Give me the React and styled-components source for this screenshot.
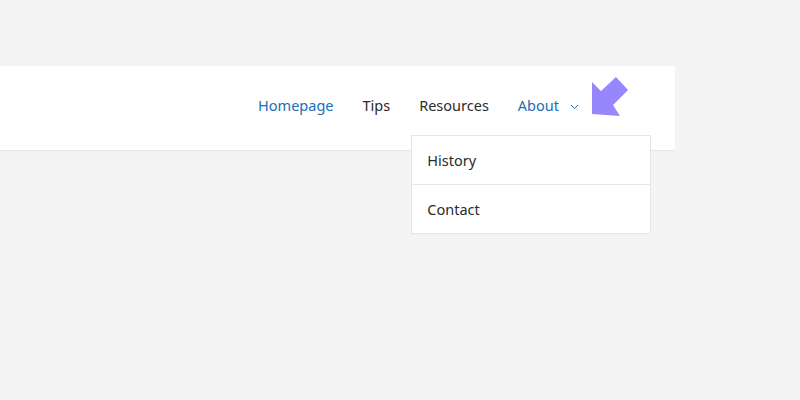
import React from "react";
import styled, { createGlobalStyle } from "styled-components";

const GlobalStyle = createGlobalStyle`
  html, body {
    margin: 0;
    padding: 0;
    background: #f4f4f4;
    font-family: "Noto Sans", "Open Sans", sans-serif;
  }
`;

const Page = styled.div`
  width: 800px;
  height: 400px;
  padding-top: 66px;
  box-sizing: border-box;
`;

const Header = styled.header`
  position: relative;
  width: 675px;
  height: 84px;
  background: #fff;
  border-bottom: 1px solid #e6e6e6;
`;

const Nav = styled.ul`
  display: flex;
  justify-content: flex-end;
  align-items: stretch;
  height: 100%;
  margin: 0;
  padding: 0 25px 0 0;
  list-style: none;
`;

const NavItem = styled.li`
  position: relative;
  display: flex;
  align-items: center;
  gap: 11px;
  padding: ${(p) => (p.$last ? "0 71px 6px 14.5px" : "0 14.5px 6px")};
  font-size: 14.5px;
  color: ${(p) => (p.$active ? "#1a6db8" : "#2b2b2b")};
  cursor: pointer;
`;

const Chevron = styled.svg`
  width: 9px;
  height: 6px;
  margin-top: 3px;
`;

const Dropdown = styled.ul`
  position: absolute;
  top: 69px;
  left: -92px;
  width: 240px;
  margin: 0;
  padding: 0;
  list-style: none;
  background: #fff;
  border: 1px solid #e6e6e6;
  box-sizing: border-box;
  z-index: 10;
`;

const DropdownItem = styled.li`
  height: 48px;
  display: flex;
  align-items: center;
  padding: 0 15px;
  font-size: 14.5px;
  color: #2b2b2b;
  & + & {
    border-top: 1px solid #e6e6e6;
  }
`;

const Pointer = styled.svg`
  position: absolute;
  left: 590px;
  top: 10px;
  width: 40px;
  height: 42px;
`;

const App = () => {
  return (
    <Page>
      <GlobalStyle />
      <Header>
        <Nav>
          <NavItem $active>Homepage</NavItem>
          <NavItem>Tips</NavItem>
          <NavItem>Resources</NavItem>
          <NavItem $active $last>
            About
            <Chevron viewBox="0 0 9 6">
              <path d="M1 1l3.5 3.5L8 1" fill="none" stroke="#1a6db8" strokeWidth="1" />
            </Chevron>
            <Dropdown>
              <DropdownItem>History</DropdownItem>
              <DropdownItem>Contact</DropdownItem>
            </Dropdown>
          </NavItem>
        </Nav>
        <Pointer viewBox="0 0 40 42">
          <polygon points="2,38 2,6 11,15 26,1 38,14 23,29 30,40" fill="#9887fc" />
        </Pointer>
      </Header>
    </Page>
  );
};

export default App;
